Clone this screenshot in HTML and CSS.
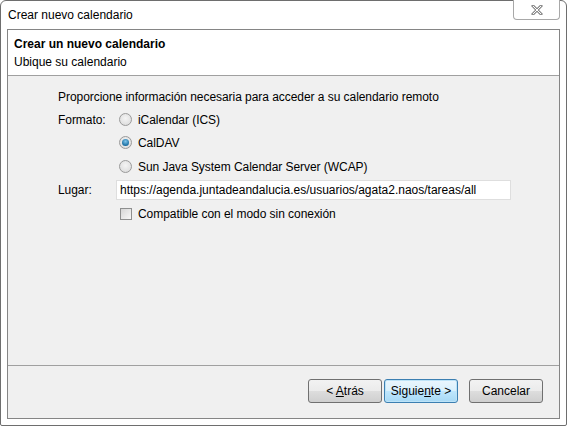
FILE: index.html
```html
<!DOCTYPE html>
<html lang="es">
<head>
	<meta charset="utf-8">
	<title>Crear nuevo calendario</title>
	<link rel="stylesheet" href="styles.css">
</head>
<body>
	<div class="window">
		<div class="titlebar">
			<span class="title">Crear nuevo calendario</span>
			<div class="close">
				<svg width="12" height="10" viewBox="0 0 12 10">
					<path d="M2 1 L10 9 M10 1 L2 9" stroke="#8c8c8c" stroke-width="3" stroke-linecap="square"/>
					<path d="M2 1 L10 9 M10 1 L2 9" stroke="#ffffff" stroke-width="1"/>
				</svg>
			</div>
		</div>
		<div class="frame">
			<div class="header">
				<div class="hTitle">Crear un nuevo calendario</div>
				<div class="hSub">Ubique su calendario</div>
			</div>
			<div class="content">
				<div class="row intro">Proporcione información necesaria para acceder a su calendario remoto</div>
				<div class="row">
					<span class="lbl">Formato:</span>
					<span class="radio"></span><span>iCalendar (ICS)</span>
				</div>
				<div class="row">
					<span class="lbl"></span>
					<span class="radio checked"></span><span>CalDAV</span>
				</div>
				<div class="row tall">
					<span class="lbl"></span>
					<span class="radio"></span><span>Sun Java System Calendar Server (WCAP)</span>
				</div>
				<div class="row short">
					<span class="lbl">Lugar:</span>
					<input class="field" type="text" value="https://agenda.juntadeandalucia.es/usuarios/agata2.naos/tareas/all">
				</div>
				<div class="row check">
					<span class="lbl"></span>
					<span class="box"></span><span>Compatible con el modo sin conexión</span>
				</div>
			</div>
			<div class="footer">
				<div class="btn">&lt; <u>A</u>trás</div>
				<div class="btn focus">Siguie<u>n</u>te &gt;</div>
				<div class="btn cancel">Cancelar</div>
			</div>
		</div>
	</div>
</body>
</html>
```

FILE: styles.css
```css
body {
	margin: 0;
	font-family: "Liberation Sans", Arial, sans-serif;
	font-size: 12px;
	color: #000;
}

div.window {
	position: relative;
	width: 567px;
	height: 426px;
	box-sizing: border-box;
	border: 1px solid #6e6e6e;
	border-radius: 6px 6px 2px 2px;
	background: #fff;
}

div.titlebar {
	height: 28px;
	line-height: 29px;
	padding-left: 7px;
}

div.close {
	position: absolute;
	top: -1px;
	right: 6px;
	width: 45px;
	height: 19px;
	border: 1px solid #a8a8a8;
	border-top: none;
	border-radius: 0 0 4px 4px;
	background: #fff;
	display: flex;
	align-items: center;
	justify-content: center;
}

div.frame {
	margin: 0 6px;
	height: 390px;
	box-sizing: border-box;
	border: 1px solid #858585;
	background: #f0f0f0;
}

div.header {
	height: 46px;
	box-sizing: border-box;
	padding: 5px 6px 0;
	line-height: 18px;
	background: #fff;
	border-bottom: 1px solid #a0a0a0;
}

div.hTitle {
	font-weight: bold;
}

div.content {
	height: 290px;
	box-sizing: border-box;
	padding: 9px 0 0 50px;
	border-bottom: 1px solid #a0a0a0;
	letter-spacing: -0.05px;
}

div.row {
	display: flex;
	align-items: center;
	height: 23px;
}

div.row.tall {
	height: 25px;
}

div.row.short {
	height: 21px;
}

div.row.check {
	height: 24px;
	margin-top: 2px;
}

span.lbl {
	width: 58px;
	flex: none;
}

span.radio {
	width: 11px;
	height: 11px;
	margin: 0 6px 0 3px;
	border: 1px solid #9a9a9a;
	border-radius: 50%;
	background: radial-gradient(circle at 50% 40%, #f4f4f4, #d8d8d8);
	position: relative;
}

span.radio.checked::after {
	content: "";
	position: absolute;
	left: 2px;
	top: 2px;
	width: 7px;
	height: 7px;
	border-radius: 50%;
	background: radial-gradient(circle at 50% 35%, #7fc4ea, #1a6fa3 70%, #0f4f7a);
}

span.box {
	width: 10px;
	height: 10px;
	margin: 0 6px 0 4px;
	border: 1px solid #8e8f8f;
	background: linear-gradient(135deg, #d6d6d6, #f8f8f8);
}

input.field {
	width: 395px;
	height: 20px;
	box-sizing: border-box;
	margin: 0;
	padding: 0 3px;
	border: 1px solid #dedede;
	background: #fff;
	font-family: inherit;
	font-size: 12px;
	color: #000;
	outline: none;
}

div.footer {
	display: flex;
	justify-content: flex-end;
	padding: 13px 16px 0 0;
}

div.btn {
	width: 74px;
	height: 24px;
	box-sizing: border-box;
	margin-left: 2px;
	border: 1px solid #707070;
	border-radius: 3px;
	background: linear-gradient(#f2f2f2, #ebebeb 50%, #dddddd 51%, #cfcfcf);
	text-align: center;
	line-height: 22px;
}

div.btn.focus {
	border-color: #3c7fb1;
	box-shadow: inset 0 0 0 1px #bde3f7;
	background: linear-gradient(#eaf6fd, #d9f0fc 50%, #bee6fd 51%, #a7d9f5);
}

div.btn.cancel {
	margin-left: 11px;
}
```
